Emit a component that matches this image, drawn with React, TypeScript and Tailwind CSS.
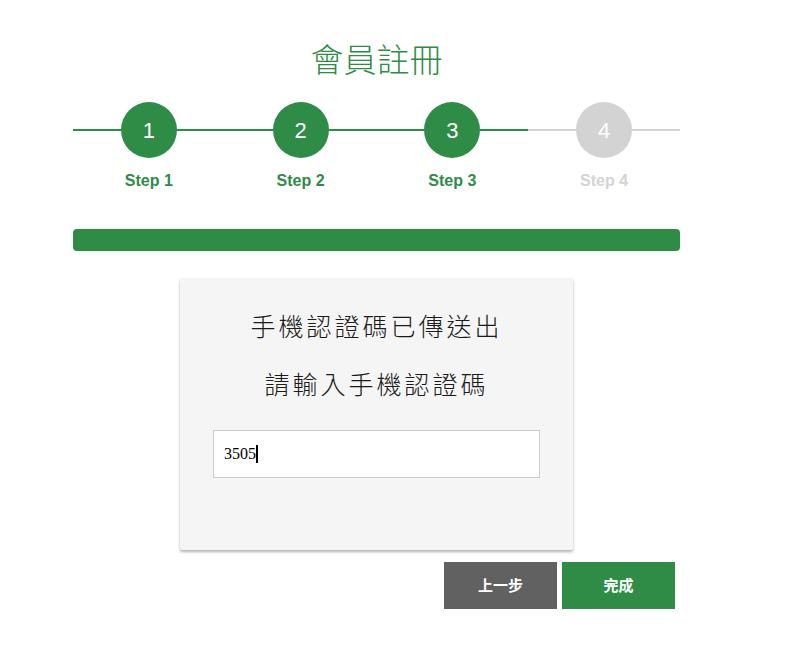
import React from "react";

const steps = [1, 2, 3, 4];
const current = 3;

export default function App() {
  return (
    <div className="min-h-screen bg-white font-['Liberation_Sans','Noto_Sans_CJK_TC',sans-serif]">
      <div className="ml-[73px] w-[607px] pt-[38px]">
        {/* 標題 */}
        <h1 className="text-center text-[33px] leading-[40px] font-light text-[#2f8c47] font-['Noto_Sans_CJK_TC',sans-serif]">
          會員註冊
        </h1>

        {/* 步驟 */}
        <div className="mt-[24px] flex">
          {steps.map((n) => {
            const done = n <= current;
            return (
              <div key={n} className="flex-1 flex flex-col items-center">
                <div className="w-full flex items-center">
                  <div className={`flex-1 h-[2px] ${done ? "bg-[#2f8c47]" : "bg-[#d3d3d3]"}`} />
                  <div
                    className={`w-[56px] h-[56px] rounded-full flex items-center justify-center text-white text-[22px] ${
                      done ? "bg-[#2f8c47]" : "bg-[#d3d3d3]"
                    }`}
                  >
                    {n}
                  </div>
                  <div className={`flex-1 h-[2px] ${done ? "bg-[#2f8c47]" : "bg-[#d3d3d3]"}`} />
                </div>
                <div
                  className={`mt-[13px] text-[16px] leading-[20px] font-bold ${
                    done ? "text-[#2f8c47]" : "text-[#d3d3d3]"
                  }`}
                >
                  Step {n}
                </div>
              </div>
            );
          })}
        </div>

        {/* 進度條 */}
        <div className="mt-[38px] h-[22px] rounded-[4px] bg-[#2f8c47]" />

        {/* 認證卡 */}
        <div className="mt-[27px] mx-auto w-[393px] bg-[#f5f5f5] rounded-[2px] shadow-[0_2px_3px_rgba(0,0,0,0.3)] pt-[30px] pb-[72px] px-[33px] font-['Noto_Sans_CJK_TC',sans-serif] text-[#1a1a1a]">
          <p className="text-center text-[25px] leading-[34px] font-light tracking-[3px]">手機認證碼已傳送出</p>
          <p className="mt-[24px] text-center text-[25px] leading-[34px] font-light tracking-[3px]">請輸入手機認證碼</p>
          <div className="mt-[30px] h-[48px] bg-white border border-[#cccccc] flex items-center pl-[10px] font-['Liberation_Serif',serif] text-[16px] text-black">
            <span>3505</span>
            <span className="inline-block w-[2px] h-[18px] bg-black" />
          </div>
        </div>

        {/* 按鈕 */}
        <div className="mt-[12px] pr-[5px] flex justify-end gap-[5px]">
          <button className="w-[113px] h-[47px] bg-[#616161] text-white text-[15px] font-bold font-['Noto_Sans_CJK_TC',sans-serif]">
            上一步
          </button>
          <button className="w-[113px] h-[47px] bg-[#2f8c47] text-white text-[15px] font-bold font-['Noto_Sans_CJK_TC',sans-serif]">
            完成
          </button>
        </div>
      </div>
    </div>
  );
}
